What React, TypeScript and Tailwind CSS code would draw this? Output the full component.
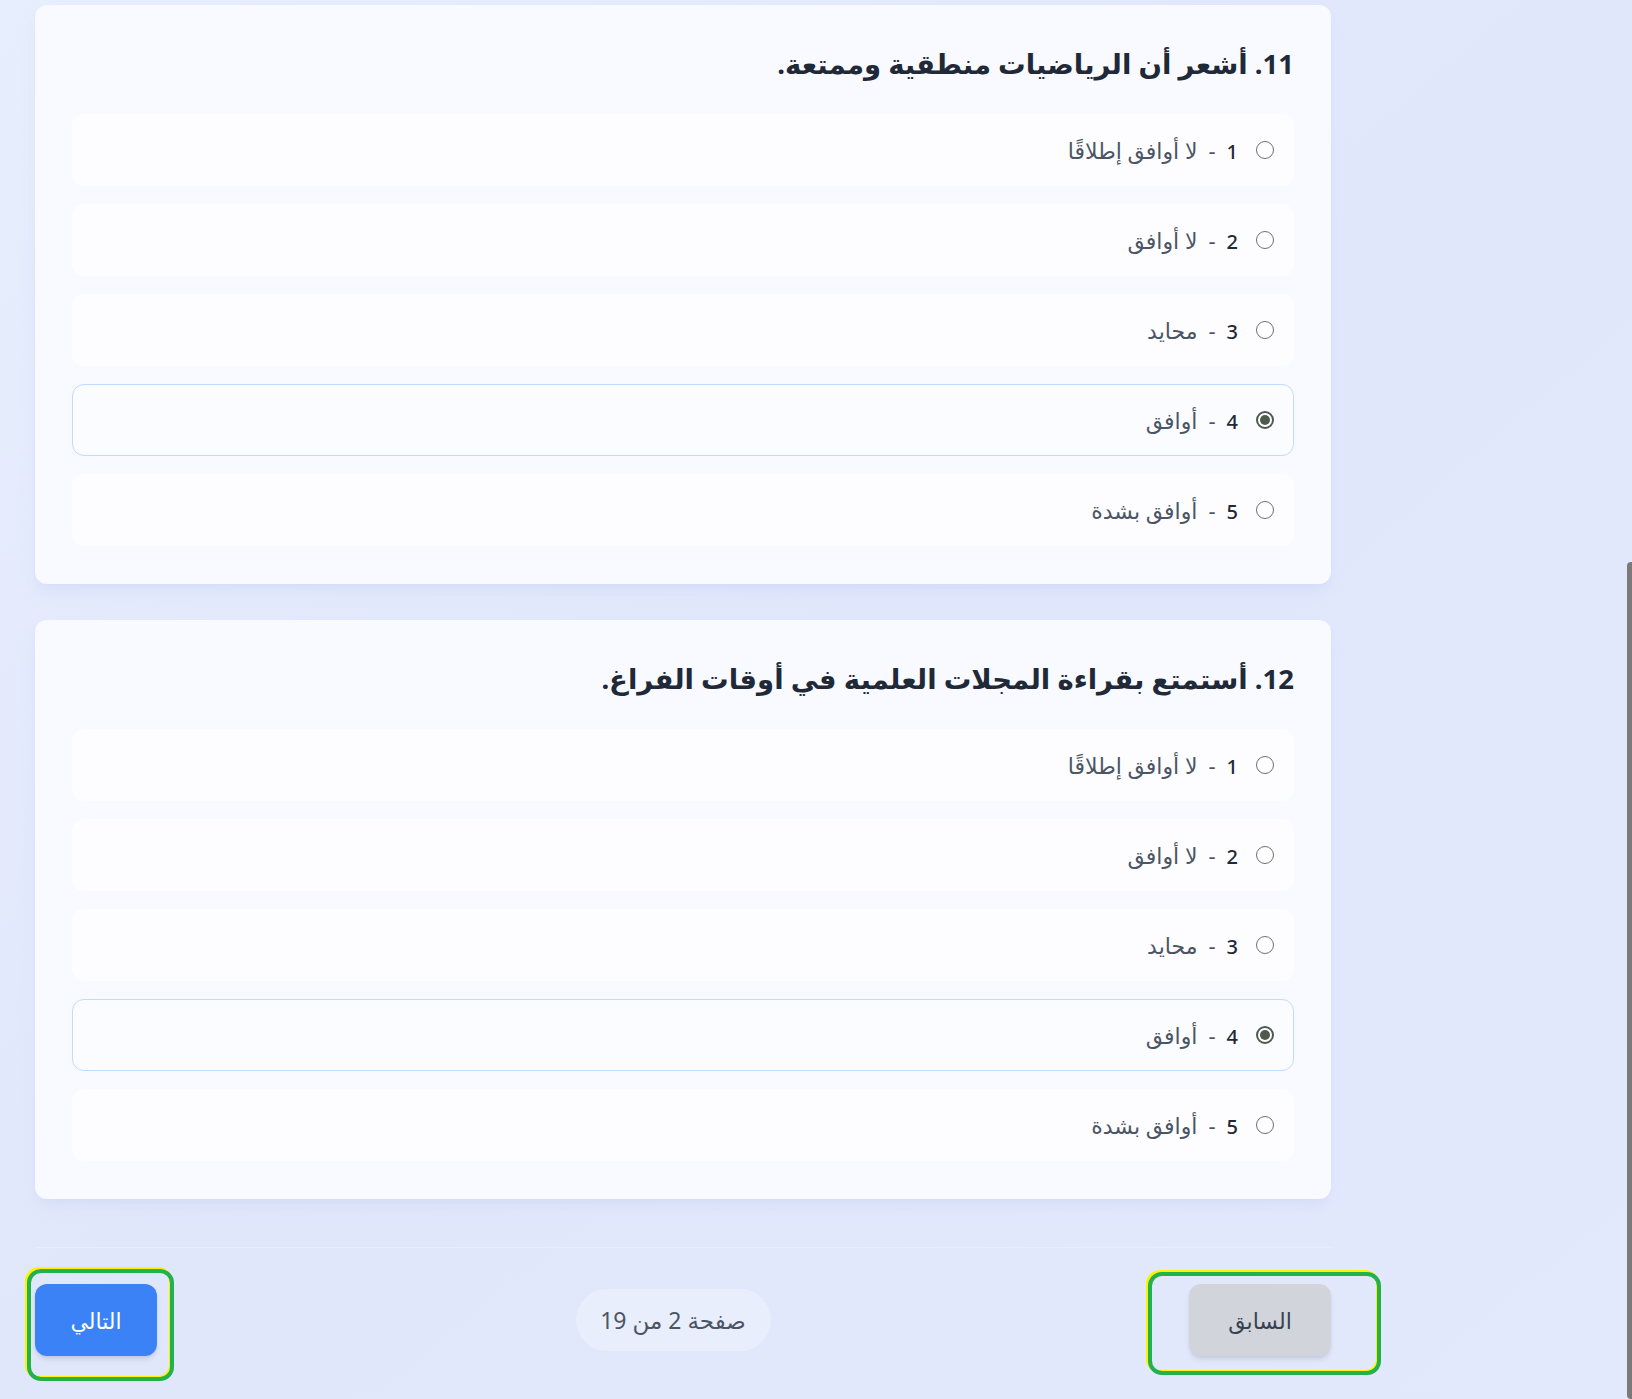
import React from "react";

const options = [
  { value: 1, label: "لا أوافق إطلاقًا" },
  { value: 2, label: "لا أوافق" },
  { value: 3, label: "محايد" },
  { value: 4, label: "أوافق" },
  { value: 5, label: "أوافق بشدة" },
];

const questions = [
  { id: 11, text: "أشعر أن الرياضيات منطقية وممتعة.", answer: 4 },
  { id: 12, text: "أستمتع بقراءة المجلات العلمية في أوقات الفراغ.", answer: 4 },
];

function Radio({ checked }: { checked: boolean }) {
  return checked ? (
    <span className="flex h-[18px] w-[18px] shrink-0 items-center justify-center rounded-full border-2 border-[#4f594f] bg-white">
      <span className="h-[10px] w-[10px] rounded-full bg-[#4f5a4f]" />
    </span>
  ) : (
    <span className="h-[18px] w-[18px] shrink-0 rounded-full border-[1.5px] border-[#6f6f6f] bg-white" />
  );
}

function QuestionCard({ q }: { q: (typeof questions)[number] }) {
  return (
    <section className="rounded-xl bg-[#f8faff] px-[37px] pt-[37px] pb-[38px] shadow-lg shadow-[#c7d2f5]/40">
      <h2 className="mb-[28px] h-[44px] text-[27.5px] font-bold leading-[44px] text-[#1f2937]">
        {q.id}. {q.text}
      </h2>
      <div className="flex flex-col gap-[18px]">
        {options.map((o) => {
          const sel = o.value === q.answer;
          return (
            <label
              key={o.value}
              className={`flex h-[72px] items-center gap-[18px] rounded-xl border px-[19px] ${
                sel ? "border-[#bfdbfe] bg-[#fbfcff]" : "border-transparent bg-[#fdfdff]"
              }`}
            >
              <Radio checked={sel} />
              <span className="text-[22px] text-[#4b5563]">
                <span className="text-[20px] font-medium text-[#1f2937]">{o.value}</span>
                <span className="mx-[11px]">-</span>
                {o.label}
              </span>
            </label>
          );
        })}
      </div>
    </section>
  );
}

export default function App() {
  return (
    <div
      dir="rtl"
      className="relative min-h-[1399px] bg-gradient-to-br from-[#e7eefd] via-[#e1e7fb] to-[#e3e9fd] font-['Noto_Sans','DejaVu_Sans',sans-serif]"
    >
      <div className="ml-[35px] mr-auto w-[1296px] pt-[5px]">
        <div className="flex flex-col gap-[36px]">
          {questions.map((q) => (
            <QuestionCard key={q.id} q={q} />
          ))}
        </div>

        <div className="mt-[48px] flex items-center justify-between border-t border-[#e7edfd] pt-[36px] pb-[41px]">
          <button className="h-[72px] w-[142px] rounded-xl bg-[#d1d5db] text-[22px] text-[#374151] shadow-md">
            السابق
          </button>
          <div className="flex h-[62px] w-[195px] items-center justify-center rounded-full bg-[#e9eefd] text-[23px] text-[#4b5563]">
            صفحة 2 من 19
          </div>
          <button className="h-[72px] w-[122px] rounded-xl bg-[#3b82f6] text-[22px] text-white shadow-md">
            التالي
          </button>
        </div>
      </div>

      {/* highlight overlays */}
      <div className="pointer-events-none absolute left-[25px] top-[1267px] h-[112px] w-[147px] rounded-[14px] border-[3px] border-[#fff200]" />
      <div className="pointer-events-none absolute left-[27px] top-[1269px] h-[112px] w-[147px] rounded-[14px] border-[4px] border-[#22b14c]" />
      <div className="pointer-events-none absolute left-[1146px] top-[1270px] h-[103px] w-[233px] rounded-[14px] border-[3px] border-[#fff200]" />
      <div className="pointer-events-none absolute left-[1148px] top-[1272px] h-[103px] w-[233px] rounded-[14px] border-[4px] border-[#22b14c]" />

      {/* scrollbar thumb */}
      <div className="absolute right-0 top-[562px] h-[837px] w-[5px] rounded-l bg-[#7a7a7a]" />
    </div>
  );
}
